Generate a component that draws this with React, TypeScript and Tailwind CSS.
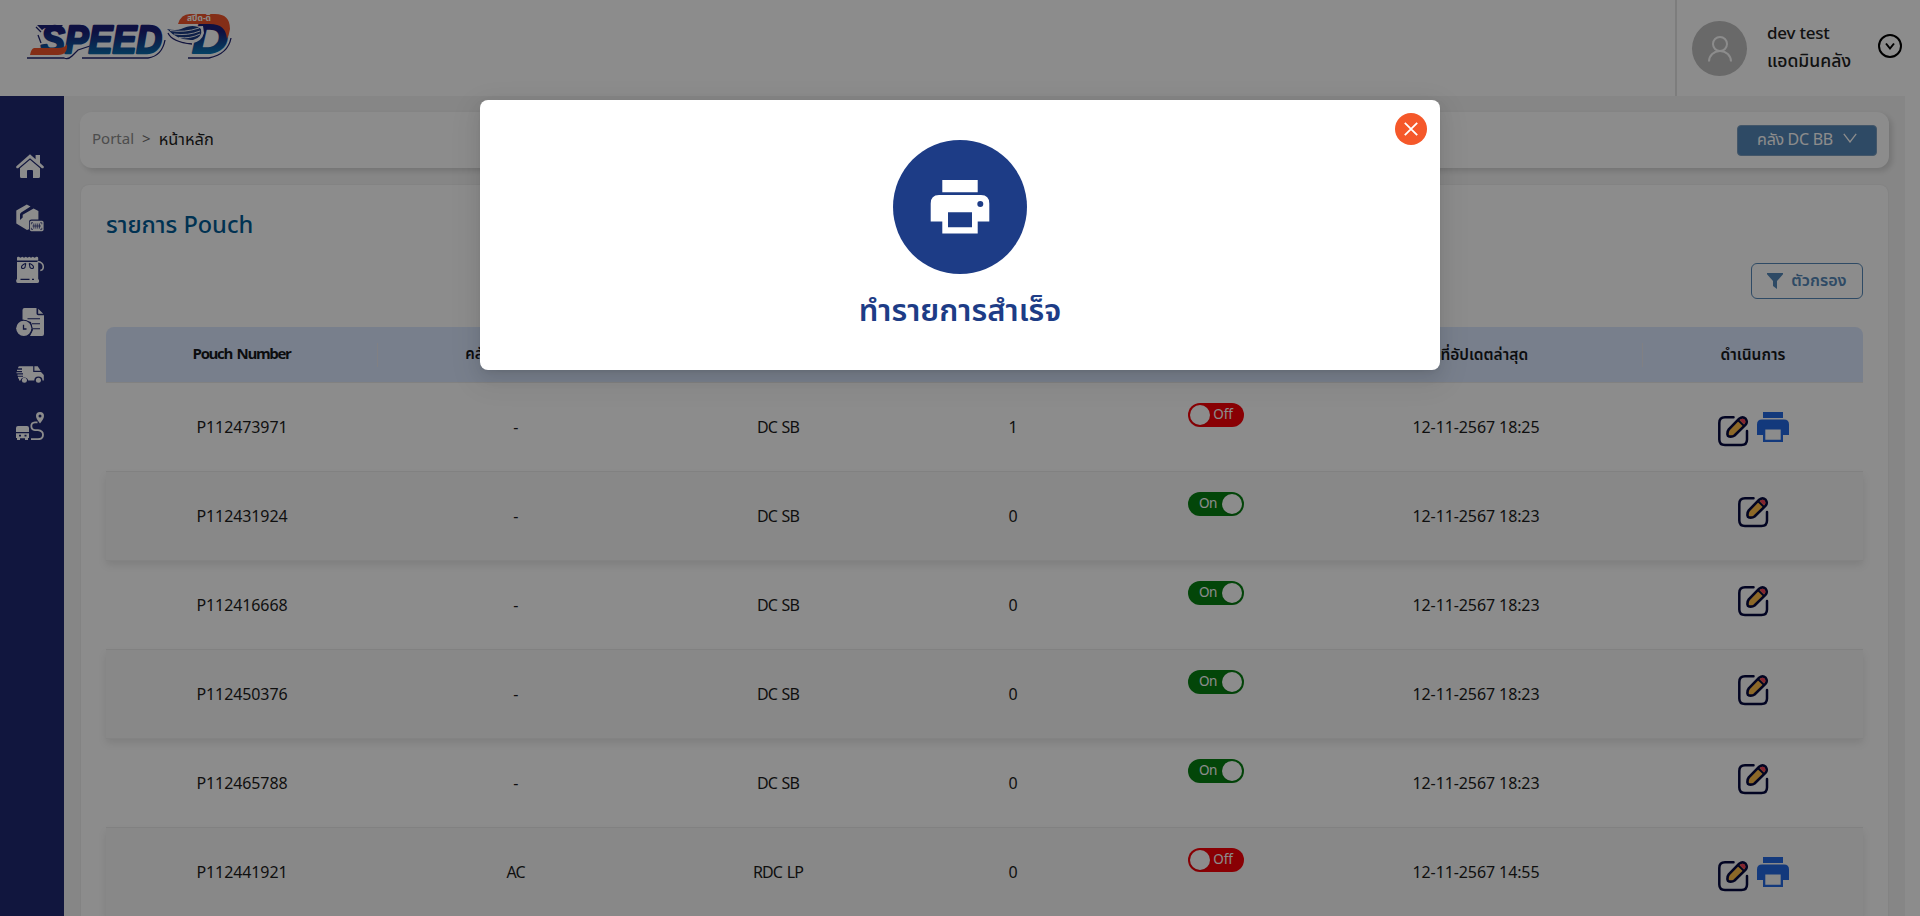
import React from "react";

type Row = { id: string; shop: string; dest: string; count: string; on: boolean; at: string; print: boolean };

const rows: Row[] = [
  { id: "P112473971", shop: "-", dest: "DC SB", count: "1", on: false, at: "12-11-2567 18:25", print: true },
  { id: "P112431924", shop: "-", dest: "DC SB", count: "0", on: true, at: "12-11-2567 18:23", print: false },
  { id: "P112416668", shop: "-", dest: "DC SB", count: "0", on: true, at: "12-11-2567 18:23", print: false },
  { id: "P112450376", shop: "-", dest: "DC SB", count: "0", on: true, at: "12-11-2567 18:23", print: false },
  { id: "P112465788", shop: "-", dest: "DC SB", count: "0", on: true, at: "12-11-2567 18:23", print: false },
  { id: "P112441921", shop: "AC", dest: "RDC LP", count: "0", on: false, at: "12-11-2567 14:55", print: true },
];

const columns = "grid grid-cols-[272px_275px_250px_220px_186px_334px_220px]";

function Logo() {
  return (
    <svg width="212" height="52" viewBox="24 10 212 52" className="block overflow-visible">
      <defs>
        <linearGradient id="ink" x1="0" y1="0" x2="0" y2="1">
          <stop offset="0.3" stopColor="#1b1f78" />
          <stop offset="0.85" stopColor="#0a6cab" />
        </linearGradient>
        <linearGradient id="dee" x1="0" y1="0" x2="0" y2="1">
          <stop offset="0.35" stopColor="#1b1f78" />
          <stop offset="0.85" stopColor="#0a7cb8" />
        </linearGradient>
      </defs>
      <path d="M27 58H64Q68 60 72 56L78 50L90 46M82 58H148Q162 56 165 40M36 27L41 32M38 35L41 43M168 33Q172 42 192 44M188 58H209Q228 54 231 38" fill="none" stroke="#1f2470" strokeWidth="1.3" />
      <g fontFamily="'Liberation Sans', sans-serif" fontWeight="700" fontStyle="italic" strokeLinejoin="round">
        <text x="41" y="53" fontSize="38" textLength="121" lengthAdjust="spacingAndGlyphs" fill="url(#ink)" stroke="url(#ink)" strokeWidth="2.4">SPEED</text>
        <text x="192" y="53" fontSize="42" textLength="36" lengthAdjust="spacingAndGlyphs" fill="url(#dee)" stroke="url(#dee)" strokeWidth="2">D</text>
      </g>
      <path d="M37 25H63L60 28H46Q44 28 42 30Z" fill="#1b1f78" />
      <path d="M34 48H58Q65 48 67 44Q68 55 58 55H30Q31 49 34 48Z" fill="#f0552b" />
      <path d="M178 24Q181 14 190 14H215Q230 14 230 29Q229 35 227 39Q226 24 210 24Z" fill="#f0552b" />
      <text x="187" y="21" fontSize="8" fontWeight="700" fontFamily="'Noto Sans Thai', 'Noto Sans', sans-serif" textLength="24" lengthAdjust="spacingAndGlyphs" fill="#fff">สปีด-ดี</text>
      <path d="M165 28L203 26L204 33Q202 41 193 43Q178 44 165 28Z" fill="#fff" />
      <path d="M167 29Q176 31 181 29Q194 23 201 29Q203 37 193 40Q178 41 167 29Z" fill="#1b3b84" />
      <path d="M170 30.500Q184 33 199 28M174 34Q188 36 200 31M179 37.500Q190 39 200 34" fill="none" stroke="#fff" strokeWidth="0.9" />
    </svg>
  );
}

function SideIcon({ children }: { children: React.ReactNode }) {
  return (
    <svg width="28" height="28" viewBox="0 0 28 28" fill="#fff" className="block">
      {children}
    </svg>
  );
}

const INK = "#1f2872";

function Sidebar() {
  return (
    <nav className="flex w-16 shrink-0 flex-col items-start gap-6 bg-[#1f2872] pt-14 pl-4">
      <SideIcon>
        <path d="M14 2.3L19.6 7.2V3H24V11L27.6 14.2Q28.3 15.3 27.3 16.3H25.9L14 6.2L2.1 16.3H.7Q-.3 15.3.4 14.2Z" />
        <path d="M14 7.8L24 16.3V24.5Q24 26 22.5 26H17V19Q17 18 16 18H12Q11 18 11 19V26H5.5Q4 26 4 24.5V16.3Z" />
      </SideIcon>
      <SideIcon>
        <path d="M10.8.5L14.5 2.4L5.2 8.4Q4 9.2 4 10.5V16L6.7 13.5V10.8L17.6 4.4L22.4 7V15.6H15.5Q13 15.6 13 18V25.3L11 26L.3 19.5V6.5Z" />
        <rect x="13.8" y="16.8" width="13.8" height="10.4" rx="1.6" />
        <path d="M17 18.7H15.4V20.3M24.2 18.7H25.8V20.3M17 25.4H15.4V23.8M24.2 25.4H25.8V23.8M17.8 19.5V24.6M19.8 19.5V24.6M21.7 19.5V24.6M23.5 19.5V24.600M16.5 22H25" fill="none" stroke={INK} strokeWidth=".7" />
      </SideIcon>
      <SideIcon>
        <path d="M1 2Q1 .3 2.8.8L4.5 1.8L6.3.7L8 1.8L9.8.7L11.5 1.8L13.3.7L15 1.8L16.8.7L18.6 1.8L20.4.7Q22.2.5 22.2 2V4.6H1Z" />
        <path d="M1 6H22.2V22.8L23 24.2Q23.5 27 21.5 27H1.8Q-.2 27 .2 24.2L1 22.8Z" />
        <path d="M21.5 5.5Q27.3 6.2 27.3 11Q27.3 14.2 24.3 14.5" fill="none" stroke="#fff" strokeWidth="1.5" />
        <path d="M9.800 7.300Q4.700 9.600 5.600 12Q7.600 13.200 9 11.300L9.800 7.300M13.200 7.300Q18.300 9.600 17.400 12Q15.400 13.200 14 11.300L13.200 7.300M4.500 23.400H13.500M16 23.400H18" fill="none" stroke={INK} strokeWidth="1.1" />
      </SideIcon>
      <SideIcon>
        <path d="M8.5 0H20.5V5.5Q20.5 7.2 22.3 7.2H28V26Q28 28 26 28H14L17 22L15 14L6.5 11.5V2Q6.5 0 8.5 0ZM22.2.8L27.2 5.8H22.2Z" />
        <path d="M11.5 10.8H24M16 15.8H24M17 20.8H24" stroke={INK} strokeWidth="1.1" />
        <circle cx="7.8" cy="20.3" r="8.6" fill={INK} />
        <circle cx="7.8" cy="20.3" r="7.6" />
        <path d="M7.5 16.700V21H10.500" fill="none" stroke={INK} strokeWidth="1.3" />
      </SideIcon>
      <SideIcon>
        <path d="M3.5 6.3H17.2V12H25L27.8 15V20.5H26.5A4 4 0 0 0 18.3 20.5H12.2A4 4 0 0 0 4.5 20.5H3V18.500H2V16.800H7V15.700H1.500V14.500H7V13.300H.5V12.200H6V11H1V9.800H6V8.200H2Q2 6.300 3.500 6.300ZM18.4 6.300H21.700L24.700 10.800H18.400Z" />
        <circle cx="8.4" cy="20.2" r="2.5" />
        <circle cx="22.4" cy="20.2" r="2.5" />
      </SideIcon>
      <SideIcon>
        <path d="M24 0A4 4 0 0 1 28 4Q28 6.5 24 11.5Q20 6.5 20 4A4 4 0 0 1 24 0ZM24 2.5A1.5 1.5 0 1 0 24 5.5A1.5 1.5 0 1 0 24 2.5ZM2 14H11Q13 14 13 16V20H0V16Q0 14 2 14ZM0 21.2H13V26H12V28H9V26.3H4V28H1V26H0ZM3 22.8V24.6H5V22.8ZM8.5 22.8V24.6H10.5V22.8Z" fillRule="evenodd" />
        <path d="M21.5 10.4H19Q15.3 10.7 15.3 14Q15.3 17.5 19 18.2H22Q27 18.7 27 22.8Q27 27.2 22 27.2H15" fill="none" stroke="#fff" strokeWidth="1.8" />
      </SideIcon>
    </nav>
  );
}

function EditIcon() {
  return (
    <svg width="32" height="32" viewBox="0 0 32 32" className="block">
      <path d="M16.500 2.300H8Q2.300 2.300 2.300 8V24.500Q2.300 30 8 30H24.500Q30 30 30 24.500V16" fill="none" stroke="#04093f" strokeWidth="2.500" strokeLinecap="round" />
      <path d="M22.200 3.700Q25.700 1 28.600 3.700Q31 6.800 28.400 9.900L17.500 20.500Q15.500 22 12.200 21.500Q10.600 21 10.500 19.600Q10.200 16.500 11.800 14.400Z" fill="#ffbd4a" stroke="#04093f" strokeWidth="2.600" strokeLinejoin="round" />
      <path d="M23.300 4.600Q25.700 2.800 27.600 4.500Q29.200 6.500 27.500 8.800L27 9.300L22.800 5.100Z" fill="#f0405a" />
      <path d="M21.200 5.200L26.900 10.900" stroke="#04093f" strokeWidth="2" />
    </svg>
  );
}

function PrintIcon() {
  return (
    <svg width="34" height="32" viewBox="0 0 34 32" className="block">
      <path d="M7 1H27V7H7ZM6 8.5H28Q33 8.5 33 13.5V24H27V31H7V24H1V13.5Q1 8.5 6 8.5ZM9.3 18.5V28.7H24.7V18.5Z" fill="#2368e2" fillRule="evenodd" />
    </svg>
  );
}

function Toggle({ on }: { on: boolean }) {
  return on ? (
    <span className="flex h-6 w-14 items-center justify-between rounded-full bg-[#078012] pr-0.5 pl-[11px] text-white">
      <span className="text-[13.5px] tracking-[-0.5px]">On</span>
      <span className="size-5 rounded-full bg-white shadow" />
    </span>
  ) : (
    <span className="flex h-6 w-14 items-center justify-between rounded-full bg-[#fa0008] pr-[11px] pl-0.5 text-white">
      <span className="size-5 rounded-full bg-white shadow" />
      <span className="text-[13.5px]">Off</span>
    </span>
  );
}

function Cell({ children, tight }: { children: React.ReactNode; tight?: boolean }) {
  return (
    <div className={`flex items-center justify-center pt-px ${tight ? "tracking-[-0.9px] [word-spacing:1.4px]" : "tracking-[-0.1px]"}`}>
      {children}
    </div>
  );
}

function HeadCell({ children, last }: { children: React.ReactNode; last?: boolean }) {
  return (
    <div className="flex items-center">
      <div className="grow pt-0.5 text-center">{children}</div>
      {!last && <div className="h-6 w-px bg-[#e9eaf0]" />}
    </div>
  );
}

function Table() {
  return (
    <div className="w-[1757px]">
      <div className={`${columns} h-14 rounded-t-lg border-b border-[#ebebeb] bg-[#dbe8ff] text-[15px] font-semibold text-[#16181c]`}>
        <HeadCell>
          <span className="font-bold tracking-[-1.35px] [word-spacing:2px]">Pouch Number</span>
        </HeadCell>
        <HeadCell>คลังต้นทาง/ร้าน</HeadCell>
        <HeadCell>ปลายทาง</HeadCell>
        <HeadCell>จำนวน</HeadCell>
        <HeadCell>สถานะ</HeadCell>
        <HeadCell>
          <span className="text-[15.5px]">วันที่อัปเดตล่าสุด</span>
        </HeadCell>
        <HeadCell last>
          <span className="text-[15.5px]">ดำเนินการ</span>
        </HeadCell>
      </div>
      {rows.map((r, i) => (
        <div
          key={r.id}
          className={`${columns} h-[89px] border-b border-[#eeeeee] text-[16px] text-[#1c1c1c] ${i % 2 ? "bg-[#f8f8f8] shadow-[0_4px_8px_rgba(0,0,0,0.1)]" : ""}`}
        >
          <Cell>{r.id}</Cell>
          <Cell tight>{r.shop}</Cell>
          <Cell tight>{r.dest}</Cell>
          <Cell>{r.count}</Cell>
          <div className="flex justify-center pt-5">
            <Toggle on={r.on} />
          </div>
          <Cell>{r.at}</Cell>
          {r.print ? (
            <div className="flex items-start justify-center gap-[7px] pt-7">
              <div className="pt-1">
                <EditIcon />
              </div>
              <PrintIcon />
            </div>
          ) : (
            <div className="flex items-start justify-center pt-6">
              <EditIcon />
            </div>
          )}
        </div>
      ))}
    </div>
  );
}

function Modal() {
  return (
    <div className="absolute inset-0 flex items-start justify-center bg-black/45 pt-[100px]">
      <div className="relative flex h-[270px] w-[960px] flex-col items-center rounded-lg bg-white pt-10 shadow-[0_6px_16px_0_rgba(0,0,0,0.08),0_3px_6px_-4px_rgba(0,0,0,0.12),0_9px_28px_8px_rgba(0,0,0,0.05)]">
        <button className="absolute top-[13px] right-[13px] flex size-8 items-center justify-center rounded-full bg-[#f5582a]">
          <svg width="14" height="14" viewBox="0 0 14 14">
            <path d="M.8.8L13.2 13.2M13.2.8L.8 13.2" stroke="#fff" strokeWidth="1.8" />
          </svg>
        </button>
        <div className="flex size-[134px] items-center justify-center rounded-full bg-[#1d3c86]">
          <svg width="60" height="54" viewBox="0 0 60 54">
            <path d="M12.3 0H47.7V12.3H12.3ZM9 15H51Q59.3 15 59.3 23.5V41.5H47.7V53.5H12.3V41.5H.7V23.5Q.7 15 9 15ZM18 32.3V47.3H42V32.3ZM50.3 21A3 3 0 1 0 50.3 27A3 3 0 1 0 50.3 21Z" fill="#fff" fillRule="evenodd" />
          </svg>
        </div>
        <h2 className="mt-3.5 text-[31px] leading-[48px] font-semibold text-[#1d3c86]">ทำรายการสำเร็จ</h2>
      </div>
    </div>
  );
}

export default function App() {
  return (
    <div className="relative flex h-[916px] w-full flex-col overflow-hidden bg-white font-['Noto_Sans_Thai','Noto_Sans',sans-serif]">
      <header className="flex h-24 shrink-0 justify-between">
        <div className="pt-2.5 pl-6">
          <Logo />
        </div>
        <div className="flex w-[245px] border-l-2 border-[#e4e4e4]">
          <div className="mt-[21px] ml-[15px] flex size-[55px] items-center justify-center rounded-full bg-[#bfbfbf]">
            <svg width="26" height="28" viewBox="0 0 26 28" fill="none" stroke="#fff" strokeWidth="2">
              <circle cx="13" cy="9" r="7" />
              <path d="M2 26.5A11 10.5 0 0 1 24 26.5" />
            </svg>
          </div>
          <div className="mt-5 ml-5 w-[111px] leading-[28px] font-medium text-[#222]">
            <div className="text-[17px] tracking-[-0.2px]">dev test</div>
            <div className="text-[17.600px]">แอดมินคลัง</div>
          </div>
          <svg width="24" height="24" viewBox="0 0 24 24" fill="none" stroke="#000" strokeWidth="2" className="mt-[34px]">
            <circle cx="12" cy="12" r="11" />
            <path d="M8 9.5L12 14.5L16 9.5" />
          </svg>
        </div>
      </header>
      <div className="flex grow">
        <Sidebar />
        <main className="flex w-[1841px] shrink-0 flex-col bg-[#f5f5f5] pt-4 pl-4">
          <div className="flex h-14 w-[1809px] items-center justify-between rounded-xl bg-white pr-3 pl-3 shadow-[3px_3px_6px_rgba(0,0,0,0.15)]">
            <div className="flex items-center gap-2 pt-px text-[15px]">
              <span className="text-[#8c8c8c]">Portal</span>
              <span className="text-[#6c6c6c]">&gt;</span>
              <span className="text-[16.400px] text-[#1c1c1c]">หน้าหลัก</span>
            </div>
            <div className="flex h-[31px] w-[140px] items-center justify-center gap-2.5 rounded border border-[#7a9dbf] bg-[#5588b8] text-[16px] text-white">
              <span className="tracking-[-0.300px]">คลัง DC BB</span>
              <svg width="14" height="10" viewBox="0 0 14 10" fill="none" stroke="#fff" strokeWidth="1.3" className="-mt-1">
                <path d="M.8.8L7 9L13.2.8" />
              </svg>
            </div>
          </div>
          <section className="mt-[17px] ml-px flex h-[740px] w-[1807px] flex-col rounded-lg bg-white pl-[25px] shadow-[0_0_2px_rgba(0,0,0,0.1)]">
            <h1 className="mt-[25px] text-[23.500px] leading-8 font-medium text-[#005b96]">รายการ Pouch</h1>
            <div className="mt-[21px] flex w-[1757px] justify-end">
              <button className="flex h-9 w-28 items-center justify-center gap-2 rounded-md border border-[#5588b8] text-[16.200px] font-semibold text-[#5588b8]">
                <svg width="16" height="16" viewBox="0 0 16 16">
                  <path d="M0 0H16V1.3L10 8V16L6 13V8L0 1.3Z" fill="#5588b8" />
                </svg>
                <span>ตัวกรอง</span>
              </button>
            </div>
            <div className="mt-7">
              <Table />
            </div>
          </section>
        </main>
      </div>
      <Modal />
    </div>
  );
}
